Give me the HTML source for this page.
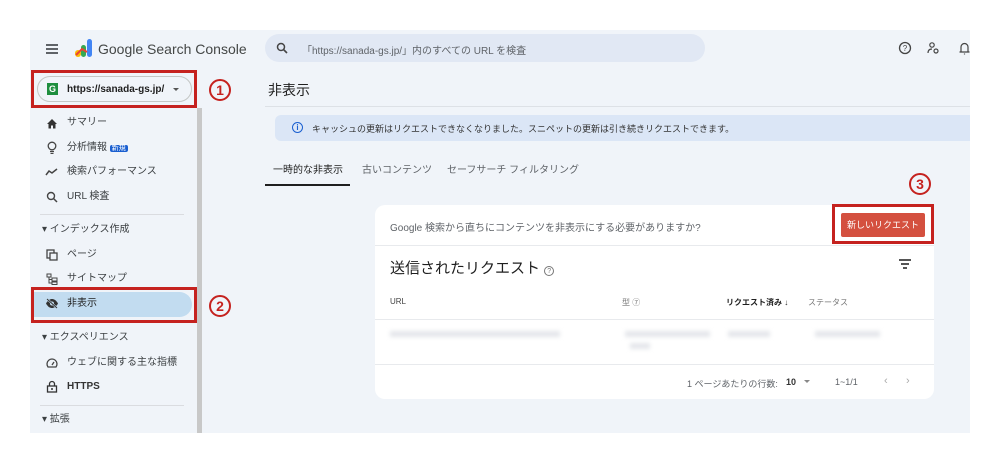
<!DOCTYPE html>
<html><head><meta charset="utf-8"><style>
*{margin:0;padding:0;box-sizing:border-box}
body{width:1000px;height:463px;background:#fff;font-family:"Liberation Sans","Noto Sans CJK JP",sans-serif;position:relative;overflow:hidden;color:#1f1f1f}
.a{position:absolute}
.app{left:30px;top:30px;width:940px;height:403px;background:#f0f4f9}
.nav{font-size:10px;color:#3c4043;left:67px;line-height:12px}
.red{border:3px solid #c5221f}
.circ{width:22px;height:22px;border:2px solid #c5221f;border-radius:50%;color:#c5221f;font-weight:bold;font-size:14px;line-height:18px;text-align:center}
.blur{background:#e4e6ea;filter:blur(2px);height:6px}
</style></head><body>
<div class="a app"></div>
<div class="a" style="left:46px;top:44px;width:12px;height:2px;background:#5f6368;box-shadow:0 4px 0 #5f6368,0 8px 0 #5f6368"></div>
<svg class="a" style="left:74px;top:38px" width="20" height="20" viewBox="0 0 20 20"><rect x="13" y="1" width="5" height="18" rx="2.5" fill="#4285f4"/><rect x="7" y="7" width="5" height="12" rx="2.5" fill="#34a853"/><rect x="1" y="12" width="6" height="7" rx="3" fill="#fbbc04"/><path d="M2 17 L8 11 L13 14" stroke="#ea4335" stroke-width="2" fill="none"/></svg>
<div class="a" style="left:98px;top:41px;font-size:14px;color:#444746">Google Search Console</div>
<div class="a" style="left:265px;top:34px;width:440px;height:28px;border-radius:14px;background:#e1e8f4"></div>
<svg class="a" style="left:276px;top:42px" width="12" height="12" viewBox="0 0 12 12"><circle cx="5" cy="5" r="3.5" stroke="#444" stroke-width="1.5" fill="none"/><path d="M7.5 7.5L11 11" stroke="#444" stroke-width="1.6"/></svg>
<div class="a" style="left:302px;top:42px;font-size:10px;color:#5f6368">「https://sanada-gs.jp/」内のすべての URL を検査</div>
<svg class="a" style="left:898px;top:41px" width="74" height="14" viewBox="0 0 74 14"><circle cx="7" cy="7" r="5.5" stroke="#444" stroke-width="1.3" fill="none"/><text x="7" y="10" font-size="8" text-anchor="middle" fill="#444" font-family="Liberation Sans">?</text><circle cx="34" cy="4" r="2.2" stroke="#444" stroke-width="1.2" fill="none"/><path d="M30 12c0-3 2-4 4-4" stroke="#444" stroke-width="1.2" fill="none"/><circle cx="38" cy="10" r="2" stroke="#444" stroke-width="1.2" fill="none"/><path d="M63 11V6a3.5 3.5 0 017 0v5zM61.5 11h10M66.5 12.5v1" stroke="#444" stroke-width="1.2" fill="none"/></svg>
<div class="a red" style="left:31px;top:70px;width:166px;height:38px"></div>
<div class="a" style="left:37px;top:76px;width:155px;height:26px;border:1px solid #c4c7c5;border-radius:13px;background:#f0f4f9"></div>
<div class="a" style="left:47px;top:83px;width:11px;height:12px;background:#1e8e3e;color:#fff;font-size:9px;font-weight:bold;text-align:center;line-height:12px">G</div>
<div class="a" style="left:67px;top:84px;font-size:10px;font-weight:bold;color:#1f1f1f">https://sanada-gs.jp/</div>
<div class="a" style="left:173px;top:88px;border:3px solid transparent;border-top:3px solid #555"></div>
<div class="a circ" style="left:209px;top:79px">1</div>
<div class="a" style="left:197px;top:108px;width:5px;height:325px;background:#c8c8c8"></div>
<div class="a" style="left:33px;top:292px;width:159px;height:25px;background:#c2dcf0;border-radius:0 13px 13px 0"></div>
<div class="a red" style="left:31px;top:287px;width:166px;height:36px"></div>
<div class="a circ" style="left:209px;top:295px">2</div>
<svg class="a" style="left:46px;top:118px" width="12" height="11"><path d="M1 6L6 1L11 6H9.5V10.5H7V7.5H5V10.5H2.5V6Z" fill="#333"/></svg>
<div class="a nav" style="top:117px">サマリー</div>
<svg class="a" style="left:47px;top:141px" width="10" height="13"><circle cx="5" cy="5" r="3.8" stroke="#444" stroke-width="1.3" fill="none"/><path d="M3 10.5h4M3.5 12.5h3" stroke="#444" stroke-width="1.2"/></svg>
<div class="a nav" style="top:142px">分析情報 <span style="background:#1a5fd0;color:#fff;font-size:7px;padding:0 2px;border-radius:2px">新規</span></div>
<svg class="a" style="left:45px;top:168px" width="13" height="8"><path d="M1 7L4 3L7 5L12 1" stroke="#444" stroke-width="1.5" fill="none"/></svg>
<div class="a nav" style="top:166px">検索パフォーマンス</div>
<svg class="a" style="left:46px;top:191px" width="12" height="12" viewBox="0 0 12 12"><circle cx="5" cy="5" r="3.5" stroke="#444" stroke-width="1.4" fill="none"/><path d="M7.5 7.5L11 11" stroke="#444" stroke-width="1.5"/></svg>
<div class="a nav" style="top:191px">URL 検査</div>
<div class="a" style="left:40px;top:214px;width:144px;height:1px;background:#dadce0"></div>
<div class="a nav" style="left:42px;top:224px">▾ インデックス作成</div>
<svg class="a" style="left:46px;top:249px" width="12" height="12"><rect x="1" y="1" width="7" height="8" stroke="#444" fill="none" stroke-width="1.3"/><rect x="4" y="4" width="7" height="7" stroke="#444" fill="#f0f4f9" stroke-width="1.3"/></svg>
<div class="a nav" style="top:249px">ページ</div>
<svg class="a" style="left:46px;top:273px" width="12" height="12"><rect x="1" y="1" width="4" height="3" stroke="#444" fill="none"/><rect x="6" y="5" width="5" height="3" stroke="#444" fill="none"/><rect x="6" y="9" width="5" height="2.5" stroke="#444" fill="none"/><path d="M3 4v6h3M3 6.5h3" stroke="#444" fill="none"/></svg>
<div class="a nav" style="top:273px">サイトマップ</div>
<svg class="a" style="left:45px;top:298px" width="14" height="11" viewBox="0 0 14 11"><path d="M1 5.5C3 2 5 1 7 1s4 1 6 4.5C11 9 9 10 7 10S3 9 1 5.5z" fill="#333"/><circle cx="7" cy="5.5" r="2" fill="#c2dcf0"/><path d="M2 1L12 10" stroke="#c2dcf0" stroke-width="2"/><path d="M2 1L12 10" stroke="#333" stroke-width="1"/></svg>
<div class="a nav" style="top:298px;color:#1f1f1f">非表示</div>
<div class="a nav" style="left:42px;top:332px">▾ エクスペリエンス</div>
<svg class="a" style="left:46px;top:357px" width="12" height="12"><path d="M2 10A5 5 0 1 1 10 10Z" stroke="#444" fill="none" stroke-width="1.3"/><path d="M6 8L8 5" stroke="#444" stroke-width="1.3"/></svg>
<div class="a nav" style="top:357px">ウェブに関する主な指標</div>
<svg class="a" style="left:46px;top:380px" width="12" height="13"><path d="M3.5 6V4a2.5 2.5 0 015 0v2" stroke="#333" fill="none" stroke-width="1.3"/><rect x="1.5" y="6" width="9" height="6" stroke="#333" fill="none" stroke-width="1.3"/><circle cx="6" cy="9" r="1" fill="#333"/></svg>
<div class="a nav" style="top:381px;font-weight:bold;color:#333">HTTPS</div>
<div class="a" style="left:40px;top:405px;width:144px;height:1px;background:#dadce0"></div>
<div class="a nav" style="left:42px;top:414px">▾ 拡張</div>
<div class="a" style="left:268px;top:80px;font-size:14px;color:#1f1f1f">非表示</div>
<div class="a" style="left:265px;top:106px;width:705px;height:1px;background:#dde1e6"></div>
<div class="a" style="left:275px;top:115px;width:695px;height:26px;background:#dbe6f6;border-radius:6px 0 0 6px"></div>
<div class="a" style="left:292px;top:122px;width:11px;height:11px;border:1px solid #1a5fd0;border-radius:50%;color:#1a5fd0;font-size:8px;line-height:9px;text-align:center;font-weight:bold">i</div>
<div class="a" style="left:312px;top:122px;font-size:9px;color:#333">キャッシュの更新はリクエストできなくなりました。スニペットの更新は引き続きリクエストできます。</div>
<div class="a" style="left:273px;top:161px;font-size:10px;color:#1f1f1f">一時的な非表示</div>
<div class="a" style="left:362px;top:161px;font-size:10px;color:#5f6368">古いコンテンツ</div>
<div class="a" style="left:447px;top:161px;font-size:10px;color:#5f6368">セーフサーチ フィルタリング</div>
<div class="a" style="left:265px;top:184px;width:85px;height:2px;background:#1f1f1f"></div>
<div class="a circ" style="left:909px;top:173px">3</div>
<div class="a" style="left:375px;top:205px;width:559px;height:194px;background:#fff;border-radius:10px"></div>
<div class="a" style="left:390px;top:219px;font-size:10px;color:#5f6368">Google 検索から直ちにコンテンツを非表示にする必要がありますか?</div>
<div class="a red" style="left:832px;top:204px;width:102px;height:40px"></div>
<div class="a" style="left:841px;top:213px;width:84px;height:24px;background:#d4503f;color:#fff;font-size:9px;line-height:24px;text-align:center;border-radius:2px;white-space:nowrap">新しいリクエスト</div>
<div class="a" style="left:375px;top:245px;width:559px;height:1px;background:#e8eaed"></div>
<div class="a" style="left:390px;top:257px;font-size:15px;color:#1f1f1f">送信されたリクエスト <span style="color:#777;border:1px solid #777;border-radius:50%;display:inline-block;width:10px;height:10px;line-height:9px;text-align:center;font-size:7px">?</span></div>
<div class="a" style="left:899px;top:259px;width:12px;height:1.5px;background:#555"></div>
<div class="a" style="left:901px;top:263px;width:8px;height:1.5px;background:#555"></div>
<div class="a" style="left:903px;top:267px;width:4px;height:1.5px;background:#555"></div>
<div class="a" style="left:390px;top:297px;font-size:8px;color:#444">URL</div>
<div class="a" style="left:622px;top:297px;font-size:8px;color:#777">型 ⑦</div>
<div class="a" style="left:726px;top:297px;font-size:8px;color:#1f1f1f;font-weight:bold">リクエスト済み ↓</div>
<div class="a" style="left:808px;top:297px;font-size:8px;color:#777">ステータス</div>
<div class="a" style="left:375px;top:319px;width:559px;height:1px;background:#e8eaed"></div>
<div class="a blur" style="left:390px;top:331px;width:170px"></div>
<div class="a blur" style="left:625px;top:331px;width:85px"></div>
<div class="a blur" style="left:630px;top:343px;width:20px"></div>
<div class="a blur" style="left:728px;top:331px;width:42px"></div>
<div class="a blur" style="left:815px;top:331px;width:65px"></div>
<div class="a" style="left:375px;top:364px;width:559px;height:1px;background:#e8eaed"></div>
<div class="a" style="left:687px;top:377px;font-size:9px;color:#5f6368">1 ページあたりの行数:</div>
<div class="a" style="left:786px;top:377px;font-size:9px;color:#333;font-weight:bold">10</div>
<div class="a" style="left:804px;top:380px;border:3px solid transparent;border-top:3px solid #888"></div>
<div class="a" style="left:835px;top:377px;font-size:9px;color:#5f6368">1~1/1</div>
<div class="a" style="left:884px;top:375px;font-size:11px;color:#aaa">‹ &nbsp;&nbsp;&nbsp;&nbsp; ›</div>
</body></html>
